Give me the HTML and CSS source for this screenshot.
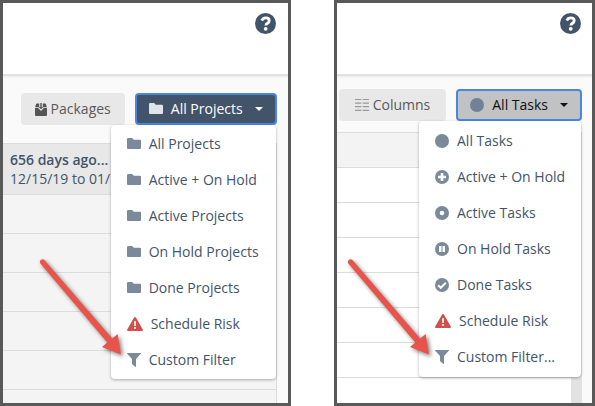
FILE: index.html
```html
<!DOCTYPE html>
<html lang="en">
<head>
<meta charset="utf-8">
<title>Filters</title>
<link rel="stylesheet" href="styles.css">
</head>
<body>
<svg class="defs" aria-hidden="true">
  <symbol id="folder" viewBox="0 0 14 12"><path d="M1 0h4.2l1.6 1.8H13a1 1 0 0 1 1 1V10a1 1 0 0 1-1 1H1a1 1 0 0 1-1-1V1a1 1 0 0 1 1-1z"/></symbol>
  <symbol id="circle" viewBox="0 0 14 14"><circle cx="7" cy="7" r="7"/></symbol>
  <symbol id="plus" viewBox="0 0 14 14"><circle cx="7" cy="7" r="7"/><path d="M7 3v8M3 7h8" stroke="#fff" stroke-width="2.6"/></symbol>
  <symbol id="dot" viewBox="0 0 14 14"><circle cx="7" cy="7" r="7"/><circle cx="7" cy="7" r="2.3" fill="#fff"/></symbol>
  <symbol id="pause" viewBox="0 0 14 14"><circle cx="7" cy="7" r="7"/><path d="M4 4h2.500v6H4zM7.500 4H10v6H7.500z" fill="#fff"/></symbol>
  <symbol id="check" viewBox="0 0 14 14"><circle cx="7" cy="7" r="7"/><path d="M3.2 7.3l2.6 2.5 5-5" fill="none" stroke="#fff" stroke-width="2"/></symbol>
  <symbol id="risk" viewBox="0 0 16 14"><path d="M7.1.6a1 1 0 0 1 1.800 0l6.900 12a1 1 0 0 1-.9 1.400H1.100a1 1 0 0 1-.9-1.400z"/><path d="M7 4.300h2l-.3 4.600H7.300z" fill="#fff"/><circle cx="8" cy="11" r="1.100" fill="#fff"/></symbol>
  <symbol id="funnel" viewBox="0 0 14 14"><path d="M.4 0h13.200c.4 0 .5.5.2.8L9 6v7.400c0 .5-.4.7-.8.4L5.400 11.400a1 1 0 0 1-.4-.8V6L.2.8C-.1.5 0 0 .4 0z"/></symbol>
  <symbol id="box" viewBox="0 0 12 13"><path d="M2 .5h2.200v3.700H.2L1 1.300Q1.200.5 2 .5zM7.800.5H10q.8 0 1 .8l.8 2.900h-4zM0 5h3.200L6 7.900 8.800 5H12v7a1 1 0 0 1-1 1H1a1 1 0 0 1-1-1z"/><path d="M5.300 0h1.400v4h1.500L6 6.300 3.800 4h1.500z"/></symbol>
  <symbol id="columns" viewBox="0 0 14 13"><path d="M0 1h6.300M7.700 1H14M0 4.600h6.300M7.700 4.600H14M0 8.200h6.300M7.700 8.200H14M0 11.800h6.300M7.700 11.800H14" stroke="#999" stroke-width="1.200"/></symbol>
  <symbol id="help" viewBox="0 0 21 21"><circle cx="10.500" cy="10.500" r="10.500"/><path d="M6.700 7.500Q8 4.900 10.700 4.900q3.500 0 3.500 2.800 0 1.500-1.700 2.600-1.600 1-1.600 2.300" fill="none" stroke="#fff" stroke-width="2.800"/><circle cx="10.700" cy="15.800" r="1.900" fill="#fff"/></symbol>
  <symbol id="arrow" viewBox="0 0 86 102"><path d="M1.400 4.400a2.600 2.600 0 0 1 4-3.300L73.200 79.500l5.400-4.600L82 95.500l-19-7.400 5.300-4.600z"/></symbol>
</svg>

<main class="page">
  <section class="panel projects">
    <header class="top"><button class="help" aria-label="Help"><svg><use href="#help"/></svg></button></header>
    <div class="toolbar">
      <button class="btn packages"><svg class="icon box"><use href="#box"/></svg>Packages</button>
      <div class="dropdown">
        <button class="btn toggle dark" aria-expanded="true"><svg class="icon folder"><use href="#folder"/></svg>All Projects<span class="caret"></span></button>
        <ul class="menu">
          <li><a href="#"><svg class="icon folder"><use href="#folder"/></svg>All Projects</a></li>
          <li><a href="#"><svg class="icon folder"><use href="#folder"/></svg>Active + On Hold</a></li>
          <li><a href="#"><svg class="icon folder"><use href="#folder"/></svg>Active Projects</a></li>
          <li><a href="#"><svg class="icon folder"><use href="#folder"/></svg>On Hold Projects</a></li>
          <li><a href="#"><svg class="icon folder"><use href="#folder"/></svg>Done Projects</a></li>
          <li><a href="#"><svg class="icon risk"><use href="#risk"/></svg>Schedule Risk</a></li>
          <li><a href="#"><svg class="icon"><use href="#funnel"/></svg>Custom Filter</a></li>
        </ul>
      </div>
    </div>
    <table class="rows">
      <thead><tr><th><strong>656 days ago...</strong><br>12/15/19 to 01/</th></tr></thead>
      <tbody>
        <tr><td></td></tr><tr><td></td></tr><tr><td></td></tr><tr><td></td></tr><tr><td></td></tr><tr><td></td></tr>
      </tbody>
    </table>
    <svg class="arrow"><use href="#arrow"/></svg>
  </section>

  <section class="panel tasks">
    <header class="top"><button class="help" aria-label="Help"><svg><use href="#help"/></svg></button></header>
    <div class="toolbar">
      <button class="btn columns"><svg class="icon"><use href="#columns"/></svg>Columns</button>
      <div class="dropdown">
        <button class="btn toggle grey" aria-expanded="true"><svg class="icon"><use href="#circle"/></svg>All Tasks<span class="caret"></span></button>
        <ul class="menu">
          <li><a href="#"><svg class="icon"><use href="#circle"/></svg>All Tasks</a></li>
          <li><a href="#"><svg class="icon"><use href="#plus"/></svg>Active + On Hold</a></li>
          <li><a href="#"><svg class="icon"><use href="#dot"/></svg>Active Tasks</a></li>
          <li><a href="#"><svg class="icon"><use href="#pause"/></svg>On Hold Tasks</a></li>
          <li><a href="#"><svg class="icon"><use href="#check"/></svg>Done Tasks</a></li>
          <li><a href="#"><svg class="icon risk"><use href="#risk"/></svg>Schedule Risk</a></li>
          <li><a href="#"><svg class="icon"><use href="#funnel"/></svg>Custom Filter...</a></li>
        </ul>
      </div>
    </div>
    <table class="rows">
      <thead><tr><th></th></tr></thead>
      <tbody>
        <tr><td></td></tr><tr><td></td></tr><tr><td></td></tr><tr><td></td></tr><tr><td></td></tr><tr><td></td></tr><tr><td></td></tr>
      </tbody>
    </table>
    <svg class="arrow"><use href="#arrow"/></svg>
  </section>
</main>
</body>
</html>
```
FILE: styles.css
```css
* {
  box-sizing: border-box;
}

body {
  margin: 0;
  background: #fff;
  color: #43546a;
  font: 14px/20px "Open Sans", "Noto Sans", sans-serif;
}

.defs {
  position: absolute;
  width: 0;
  height: 0;
}

.page {
  display: flex;
  gap: 43px;
  height: 100vh;
}

.panel {
  position: relative;
  flex: 291 1 0;
  min-width: 0;
  overflow: hidden;
  border: 3px solid #595959;
  background: #fafafa;
}

.panel.tasks {
  flex-grow: 261;
}

.top {
  display: flex;
  justify-content: flex-end;
  height: 73px;
  padding: 10px 12px;
  border-bottom: 2px solid #e1e1e1;
  background: #fff;
  box-shadow: 0 1px 2px #00000010;
}

.tasks .top {
  padding: 10px 11px;
}

.help {
  width: 21px;
  height: 21px;
  padding: 0;
  border: 0;
  background: none;
  fill: #43546a;
}

.help svg {
  display: block;
  width: 21px;
  height: 21px;
}

.toolbar {
  display: flex;
  justify-content: flex-end;
  gap: 10px;
  padding: 17px 11px 18px;
}

.tasks .toolbar {
  padding: 13px 10px 11px;
}

.btn {
  display: flex;
  align-items: center;
  height: 32px;
  padding: 0 14px;
  border: 0;
  border-radius: 4px;
  background: #e8e8e8;
  color: #5a5a5a;
  font: inherit;
  white-space: nowrap;
}

.packages {
  gap: 4px;
  fill: #555;
}

.columns {
  gap: 4px;
  padding: 0 16px;
}

.dropdown {
  position: relative;
}

.toggle {
  gap: 8px;
  padding: 0 12px;
  border: 2px solid #4a86e0;
}

.dark {
  background: #43546a;
  color: #fff;
  fill: #dfe4e8;
}

.grey {
  background: #c1c2c4;
  color: #111;
  fill: #718296;
}

.caret {
  margin-left: 4px;
  border: 4px solid transparent;
  border-top-color: currentColor;
  border-bottom: 0;
}

.icon {
  flex: none;
  width: 14px;
  height: 14px;
}

.icon.folder {
  height: 12px;
}

.icon.box {
  width: 12px;
  height: 13px;
}

.icon.risk {
  width: 16px;
  fill: #d2504b;
}

.menu {
  position: absolute;
  z-index: 1;
  top: 100%;
  right: 1px;
  width: 165px;
  margin: 0;
  padding: 1px 0;
  border-radius: 4px;
  background: #fff;
  box-shadow: 0 1px 3px #00000050;
  list-style: none;
}

.tasks .menu {
  width: 162px;
  padding: 2px 0;
}

.menu a {
  display: flex;
  align-items: center;
  gap: 8px;
  height: 36px;
  padding: 0 16px;
  color: inherit;
  fill: #7b8a9a;
  text-decoration: none;
  white-space: nowrap;
}

.rows {
  width: calc(100% - 11px);
  border-collapse: separate;
  border-spacing: 0;
}

.rows th,
.rows td {
  height: 39px;
  padding: 0;
  border-top: 1px solid #dcdcdc;
  border-right: 1px solid #dcdcdc;
  background: #f4f4f4;
}

.rows th {
  height: 51px;
  padding: 0 7px;
  background: #e8e8e8;
  font-weight: 400;
  line-height: 19px;
  text-align: left;
}

.rows strong {
  font-weight: 600;
}

.tasks .rows {
  width: calc(100% - 10px);
}

.tasks .rows th,
.tasks .rows td {
  height: 35px;
}

.tasks .rows th {
  background: #f3f3f3;
}

.tasks .rows td {
  border-right: 11px solid #e2e2e2;
  background: #fff;
}

.arrow {
  position: absolute;
  z-index: 2;
  top: 256px;
  left: 36px;
  width: 86px;
  height: 102px;
  fill: #e8534a;
  filter: drop-shadow(2px 2px 2px #00000080);
  pointer-events: none;
}

.tasks .arrow {
  left: 10px;
}
```
